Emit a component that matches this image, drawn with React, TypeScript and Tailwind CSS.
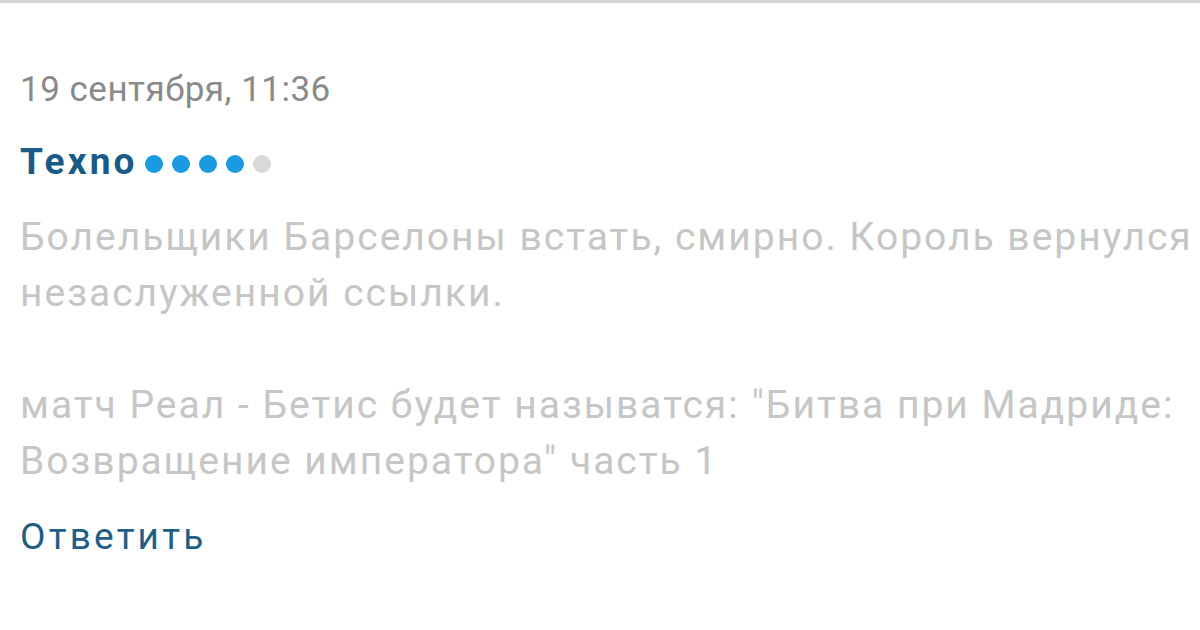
const bodyLines = [
  'Болельщики Барселоны встать, смирно. Король вернулся',
  'незаслуженной ссылки.',
  '',
  'матч Реал - Бетис будет называтся: "Битва при Мадриде:',
  'Возвращение императора" часть 1',
];

function RatingDots({ value, total }: { value: number; total: number }) {
  return (
    <div className="flex items-center gap-[9px] ml-[7px] mt-[4px]">
      {Array.from({ length: total }).map((_, i) => (
        <span
          key={i}
          className={
            i < value
              ? 'block w-[18px] h-[18px] rounded-full bg-[#1a9ae0]'
              : 'block w-[18px] h-[18px] rounded-full bg-[#d9d9d9]'
          }
        />
      ))}
    </div>
  );
}

export default function App() {
  return (
    <div
      className="w-[1200px] h-[630px] overflow-hidden bg-white"
      style={{ fontFamily: 'Roboto, "Noto Sans", sans-serif' }}
    >
      <div className="h-[3px] bg-[#d3d3d3]" />
      <div className="pl-[20px]">
        {/* Comment header */}
        <div className="mt-[67px] text-[35px] leading-[40px] tracking-[0.5px] text-[#8a8a8a]">
          19 сентября, 11:36
        </div>
        <div className="mt-[30px] flex items-center h-[44px]">
          <span className="text-[37px] leading-[44px] font-bold tracking-[3.2px] text-[#1b5a85]">Texno</span>
          <RatingDots value={4} total={5} />
        </div>

        {/* Comment body */}
        <div className="mt-[25px] text-[39px] leading-[56px] tracking-[2px] text-[#c6c6c6] whitespace-nowrap">
          {bodyLines.map((line, i) => (
            <div key={i} className="h-[56px]">
              {line}
            </div>
          ))}
        </div>

        <div className="mt-[26px] text-[37px] leading-[44px] tracking-[3.2px] text-[#1f5f86]">Ответить</div>
      </div>
    </div>
  );
}
